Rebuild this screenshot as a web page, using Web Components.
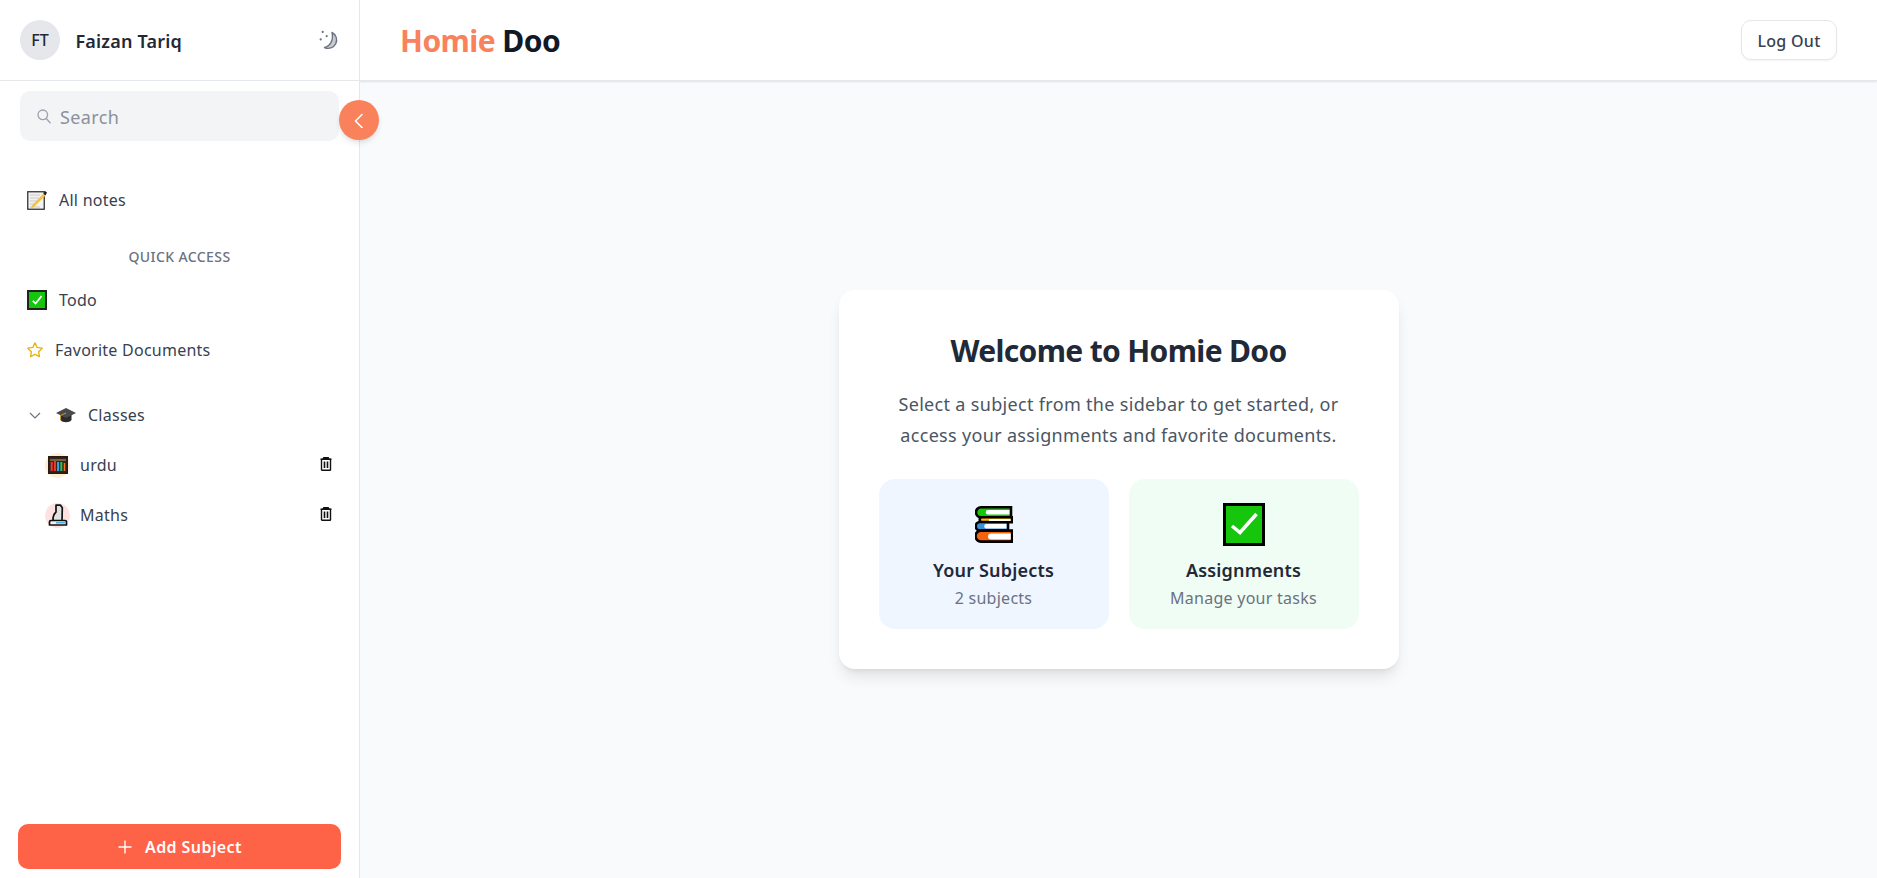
<!DOCTYPE html>
<html lang="en"><head><meta charset="utf-8"><title>Homie Doo</title>
<style>
html,body{margin:0;height:100%;}
body{font-family:"Noto Sans","Open Sans",sans-serif;color:#1f2937;background:#f9fafb;overflow:hidden;}
</style></head><body>
<app-shell>
  <app-sidebar slot="sidebar"></app-sidebar>
  <app-header slot="header"></app-header>
  <welcome-card slot="main"></welcome-card>
</app-shell>
<script>
const ICONS={
 notes:`<svg width="20" height="20" viewBox="0 0 20 20"><rect x=".75" y="1.750" width="16.500" height="17.500" fill="#f2f2f2" stroke="#333" stroke-width="1.300"/><path d="M3 5h10M3 8h9M3 11h7M3 14h6M3 17h10" stroke="#c9c9c9" stroke-width="1.200"/><path d="M5 15.500 16.500 3.500l2 2L7 17l-3 1z" fill="#f7c23a"/><path d="M16.500 3.500 18 1l2 1.500-1.500 3z" fill="#222"/></svg>`,
 check:`<svg width="20" height="20" viewBox="0 0 20 20"><rect x="1" y="1" width="18" height="18" fill="#16c60c" stroke="#222" stroke-width="2"/><path d="m5.800 10.800 2.800 2.700 6-7.500" fill="none" stroke="#fff" stroke-width="1.800"/></svg>`,
 bigcheck:`<svg width="42" height="43" viewBox="0 0 42 43"><rect x="1.500" y="1.500" width="39" height="40" fill="#16c60c" stroke="#000" stroke-width="3"/><path d="m9 23 8 6.500L33.500 11" fill="none" stroke="#fff" stroke-width="3.500"/></svg>`,
 star:`<svg width="18" height="18" viewBox="0 0 24 24" fill="none" stroke="#eab308" stroke-width="1.800" stroke-linejoin="round"><path d="m12 2.500 2.950 6.100 6.700.95-4.850 4.700 1.150 6.650L12 17.750 6.050 20.900l1.150-6.650-4.850-4.700 6.700-.95z"/></svg>`,
 cap:`<svg width="20" height="16" viewBox="0 0 20 16"><path d="M4.500 7v6c2 3 9 3 11 0V7z" fill="#2b2b2b"/><path d="M0 6 10 1l10 5-10 5z" fill="#4a4a4a"/><path d="M4.500 8.500V12M4.500 8.500 10 6" stroke="#d39a2b" stroke-width="1" fill="none"/></svg>`,
 abacus:`<svg width="20" height="20" viewBox="0 0 20 20"><rect x=".75" y="1.750" width="18.500" height="16.500" fill="#33261e" stroke="#2a1a10" stroke-width="1.500"/><path d="M2 5h16" stroke="#c99a5b" stroke-width="1"/><path d="M3.700 7v9M6.900 6v10" stroke="#f03a2e" stroke-width="2"/><path d="M10.100 7v9" stroke="#3ba4f0" stroke-width="2"/><path d="M13.300 7v9" stroke="#2fc24a" stroke-width="2"/><path d="M16.500 8v8" stroke="#f5702e" stroke-width="1.500"/></svg>`,
 micro:`<svg width="20" height="22" viewBox="0 0 20 22"><path d="M8 1.200h4.500l1.800 2.500-.3 13.300H5.500c-1.200-3.500-.3-6.500 2.500-9z" fill="#e2e2e2" stroke="#111" stroke-width="1.700" stroke-linejoin="round"/><path d="M1.500 21v-3.200c0-.8.700-1.300 1.500-1.300h14c.8 0 1.500.5 1.500 1.300V21z" fill="#f4f4f4" stroke="#111" stroke-width="1.700" stroke-linejoin="round"/><path d="M8 18.800h9" stroke="#2fa8dc" stroke-width="1.300"/></svg>`,
 books:`<svg width="38" height="37" viewBox="0 0 38 37"><g stroke="#000" stroke-width="2.600"><path d="M36 1.300H6a5 5 0 0 0 0 10h30z" fill="#16c60c" /><path d="M37 11.300H6a3 3 0 0 0 0 5h31z" fill="#fcb900"/><path d="M33 16H5a4.300 4.300 0 0 0 0 8.600h28z" fill="#3a8fd8"/><path d="M37 24.600H6a5.500 5.500 0 0 0 0 11h31z" fill="#f7630c"/></g><path d="M13 4h21.500v4.600H13a2.300 2.300 0 0 1 0-4.600zM14 13h21.500v2H14zM11 18h20.500v4.500H11a2.300 2.300 0 0 1 0-4.500zM16 27.500h19.800v6H16a3 3 0 0 1 0-6z" fill="#fff"/></svg>`,
 trash:`<svg width="12" height="14" viewBox="0 0 12 14" fill="none" stroke="#111" stroke-width="1.400" style="margin-top:-2px"><path d="M.5 2.300h11M3.800 2.300V.7h4.400v1.600"/><rect x="1.500" y="2.300" width="9" height="11" rx=".6"/><path d="M4.500 4.500v6.500M7.500 4.500v6.500" stroke-width="1.600"/></svg>`,
 moon:`<svg width="20" height="20" viewBox="0 0 20 20" fill="none" stroke="#6b7280" stroke-width="1.400" stroke-linecap="round" stroke-linejoin="round"><path d="M13 2.500a7.800 7.800 0 1 1-7.500 15c5-.8 9.500-7 7.500-15z" fill="#c9cdd3"/><path d="M3.700 1.900v.1M1.700 9.300v.1M7.700 6v.1" stroke-width="2.200"/></svg>`
};
function def(name,html){customElements.define(name,class extends HTMLElement{constructor(){super();this.attachShadow({mode:'open'}).innerHTML=html;}});}

def('app-shell',`<style>
:host{display:grid;grid-template-columns:360px 1fr;grid-template-rows:81px 1fr;height:878px;width:1877px;position:relative}
.s{grid-row:1/3;display:block;min-height:0}
.h{grid-column:2;display:block}
.m{grid-column:2;display:flex;align-items:center;justify-content:center}
</style>
<div class="s"><slot name="sidebar"></slot></div>
<div class="h"><slot name="header"></slot></div>
<div class="m"><slot name="main"></slot></div>`);

def('app-header',`<style>
:host{display:flex;align-items:center;justify-content:space-between;box-sizing:border-box;padding:0 40px;background:#fff;box-shadow:0 1px 2px rgba(0,0,0,.1);border-bottom:1px solid #e5e7eb;height:81px}
h1{margin:0;font-size:30px;font-weight:700;color:#111827;line-height:40px;letter-spacing:-.55px;padding-top:2px}
h1 span{color:#f9825c}
button{font:500 16px "Noto Sans",sans-serif;letter-spacing:.3px;color:#374151;background:#fff;border:1px solid #e5e7eb;border-radius:10px;height:40px;width:96px;padding:2px 0 0;box-shadow:0 1px 2px rgba(0,0,0,.05)}
</style><h1><span>Homie</span> Doo</h1><button>Log Out</button>`);

def('nav-row',`<style>
:host{display:flex;align-items:center;height:50px;font-size:16px;letter-spacing:.25px;color:#374151;padding-left:var(--pl,7px);padding-right:7px;gap:var(--gap,12px);box-sizing:border-box}
.t{flex:1}
</style><slot name="icon"></slot><span class="t"><slot></slot></span><slot name="end"></slot>`);

def('subject-badge',`<style>
:host{display:flex;width:25px;height:25px;border-radius:50%;align-items:center;justify-content:center;background:var(--bg)}
::slotted(*){display:block}
</style><slot></slot>`);

def('app-sidebar',`<style>
:host{display:flex;flex-direction:column;height:878px;box-sizing:border-box;background:#fff;border-right:1px solid #e5e7eb;position:relative}
.top{height:81px;box-sizing:border-box;border-bottom:1px solid #e5e7eb;display:flex;align-items:center;padding:0 20px}
.av{width:40px;height:40px;border-radius:50%;background:#e5e7eb;display:flex;align-items:center;justify-content:center;font-weight:500;font-size:16px;color:#1f2937}
.name{margin-left:15.500px;font-size:18px;font-weight:600;flex:1;letter-spacing:.18px;padding-top:1px}
.moon{display:block}
.moon svg{display:block}
.search{margin:10px 20px 0;height:50px;width:319px;background:#f3f4f6;border-radius:10px;display:flex;align-items:center;padding-left:17px;box-sizing:border-box;gap:9px;font-size:18px;letter-spacing:.4px}
.search svg{flex:none}
.search span{color:#8a919d;padding-top:2px}
.toggle{position:absolute;left:339px;top:100px;width:40px;height:40px;border-radius:50%;background:#f9825c;display:flex;align-items:center;justify-content:center;box-shadow:0 4px 6px -1px rgba(0,0,0,.1),0 2px 4px -2px rgba(0,0,0,.1)}
nav{flex:1;padding:0 20px;margin-top:34px;display:block}
.qa{text-align:center;font-size:14px;font-weight:500;letter-spacing:.4px;color:#6b7280;line-height:20px;margin:22px 0 8px}
.i{display:block}
.i svg{display:block}
.group{margin-top:15px}
.sub{--pl:25px;--gap:10px}
.foot{padding:0 18px 9px}
.add{display:flex;align-items:center;justify-content:center;gap:12px;height:45px;background:#ff6347;color:#fff;border-radius:10px;font-size:16px;font-weight:600;letter-spacing:.42px}
</style>
<div class="top"><div class="av">FT</div><div class="name">Faizan Tariq</div><span class="moon">${ICONS.moon}</span></div>
<div class="search"><svg width="14" height="15" viewBox="0 0 14 15" fill="none" stroke="#9ca3af" stroke-width="1.300"><circle cx="5.800" cy="5.800" r="4.800"/><path d="m9.300 9.500 4.200 4.700"/></svg><span>Search</span></div>
<div class="toggle"><svg width="16" height="16" viewBox="0 0 16 16" fill="none" stroke="#fff" stroke-width="1.600" stroke-linecap="round" stroke-linejoin="round"><path d="M11 2.500 4.500 9l6.500 6.500"/></svg></div>
<nav>
<nav-row><span slot="icon" class="i">${ICONS.notes}</span>All notes</nav-row>
<div class="qa">QUICK ACCESS</div>
<nav-row><span slot="icon" class="i">${ICONS.check}</span>Todo</nav-row>
<nav-row style="--gap:11px;--pl:6px"><span slot="icon" class="i">${ICONS.star}</span>Favorite Documents</nav-row>
<div class="group">
<nav-row style="--gap:11px;--pl:8px"><svg slot="icon" width="14" height="14" viewBox="0 0 14 14" fill="none" stroke="#6b7280" stroke-width="1.200" style="margin-right:3px"><path d="m2 5 5 5 5-5"/></svg><span slot="icon" class="i" style="margin-right:1px">${ICONS.cap}</span>Classes</nav-row>
<nav-row class="sub"><subject-badge slot="icon" style="--bg:#ffedd5">${ICONS.abacus}</subject-badge>urdu<span slot="end" class="i">${ICONS.trash}</span></nav-row>
<nav-row class="sub"><subject-badge slot="icon" style="--bg:#fee2e2">${ICONS.micro}</subject-badge>Maths<span slot="end" class="i">${ICONS.trash}</span></nav-row>
</div>
</nav>
<div class="foot"><div class="add"><svg width="16" height="16" viewBox="0 0 16 16" stroke="#fff" stroke-width="1.400"><path d="M8 1.500v13M1.500 8h13"/></svg>Add Subject</div></div>`);

def('info-tile',`<style>
:host{display:flex;flex-direction:column;align-items:center;background:var(--bg);border-radius:16px;height:150px;box-sizing:border-box;padding-top:24px}
.ic{display:flex;height:43px;align-items:center;justify-content:center}
.t{font-size:18px;font-weight:600;letter-spacing:.18px;color:#1f2937;line-height:28px;margin-top:10px}
.s{font-size:16px;letter-spacing:.26px;color:#6b7280;line-height:24px;margin-top:2px}
</style><div class="ic"><slot name="icon"></slot></div><div class="t"><slot name="title"></slot></div><div class="s"><slot name="sub"></slot></div>`);

def('welcome-card',`<style>
:host{display:block;width:560px;height:379px;box-sizing:border-box;background:#fff;border-radius:16px;padding:40px;text-align:center;box-shadow:0 10px 15px -3px rgba(0,0,0,.1),0 4px 6px -4px rgba(0,0,0,.1)}
h2{margin:0;font-size:30px;font-weight:700;letter-spacing:-.65px;color:#1f2937;line-height:42px}
p{margin:17px 0 0;font-size:18px;line-height:31px;letter-spacing:.32px;color:#4b5563}
.g{display:grid;grid-template-columns:1fr 1fr;gap:20px;margin-top:28px}
svg{display:block}
</style><h2>Welcome to Homie Doo</h2>
<p>Select a subject from the sidebar to get started, or access your assignments and favorite documents.</p>
<div class="g">
<info-tile style="--bg:#eff6ff"><span slot="icon">${ICONS.books}</span><span slot="title">Your Subjects</span><span slot="sub">2 subjects</span></info-tile>
<info-tile style="--bg:#f0fdf4"><span slot="icon">${ICONS.bigcheck}</span><span slot="title">Assignments</span><span slot="sub">Manage your tasks</span></info-tile>
</div>`);
</script>
</body></html>
